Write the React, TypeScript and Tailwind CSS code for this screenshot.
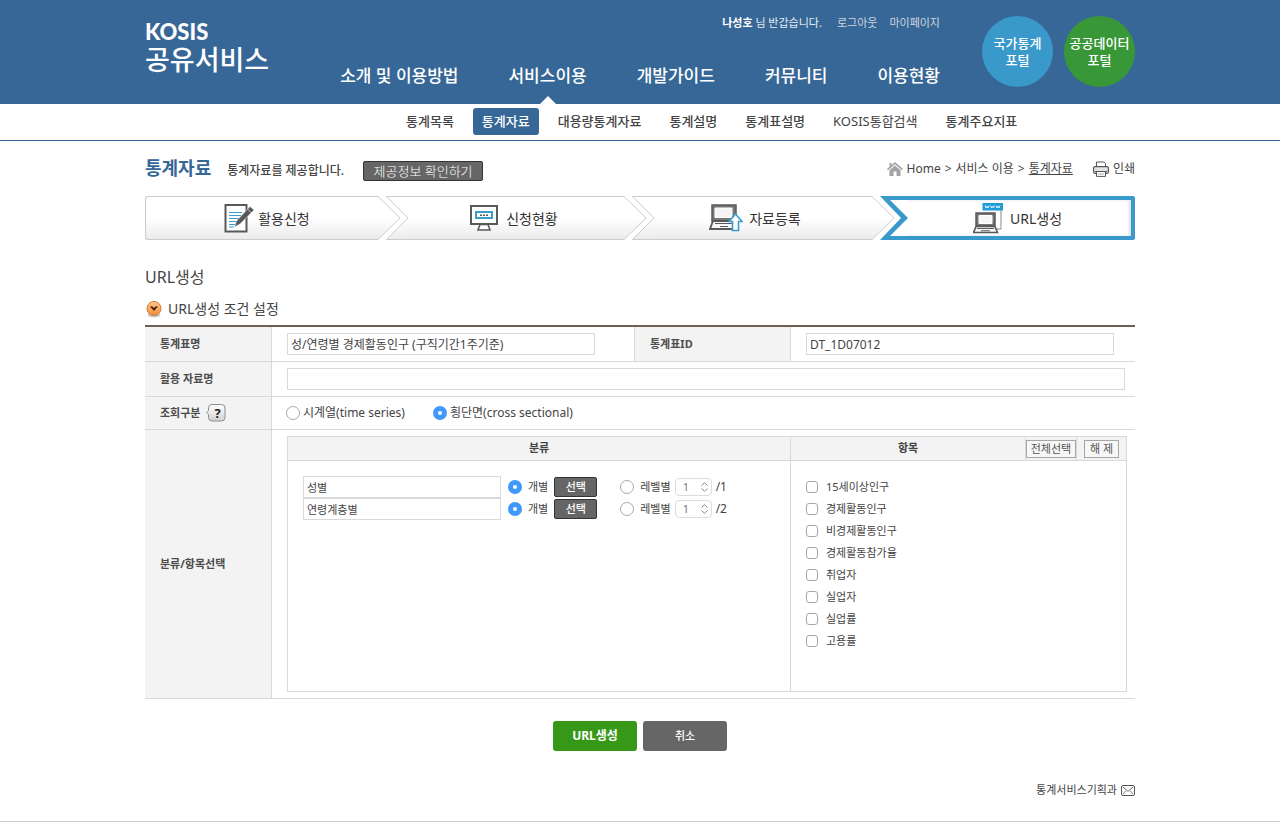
import { useState } from "react";

const NAV = ["소개 및 이용방법", "서비스이용", "개발가이드", "커뮤니티", "이용현황"];

const SUB_NAV = ["통계목록", "통계자료", "대용량통계자료", "통계설명", "통계표설명", "KOSIS통합검색", "통계주요지표"];

const ITEMS = ["15세이상인구", "경제활동인구", "비경제활동인구", "경제활동참가율", "취업자", "실업자", "실업률", "고용률"];

const GROUPS = [
  { id: "sex", name: "성별", levels: 1 },
  { id: "age", name: "연령계층별", levels: 2 },
];

const RADIO =
  "size-[14px] shrink-0 appearance-none rounded-full border border-[#a9a9a9] bg-white checked:border-[5px] checked:border-[#3f98fb]";
const CHECKBOX =
  "size-3 shrink-0 appearance-none rounded-[3px] border border-[#a6a6a6] bg-white checked:border-[#3f98fb] checked:bg-[#3f98fb]";
const FIELD = "h-[22px] border border-[#d9d9d9] bg-white px-[3px] text-[#444]";
const TH = "border-b border-[#d9d9d9] bg-[#f3f3f3] pl-[15px] text-left text-[11px] font-bold text-[#4c4c4c]";

function PencilNoteIcon() {
  return (
    <svg width="30" height="30" viewBox="0 0 30 30" fill="none" aria-hidden="true">
      <path d="M1.5 2H22.5V28.5H1.5Z" fill="#fff" stroke="#58595b" strokeWidth="2" />
      <path d="M5 9.5H18M5 12.500H17M5 15.500H15M5 18.500H13M5 21.500H11M5 24H10" stroke="#3a9ccf" strokeWidth="1.200" />
      <path d="M26 3.5L30 7L16 21L10.500 24L12.500 18Z" fill="#58595b" stroke="#fff" strokeWidth=".4" />
      <path d="M23.500 6L27.500 10" stroke="#fff" strokeWidth=".6" />
    </svg>
  );
}

function MonitorIcon() {
  return (
    <svg width="28" height="28" viewBox="0 0 28 28" fill="none" aria-hidden="true">
      <path d="M1 2H27V20H1Z" fill="#fff" stroke="#58595b" strokeWidth="2" />
      <path d="M10 20.500H18L20 26H8Z" fill="#fff" stroke="#58595b" strokeWidth="1.600" />
      <rect x="6" y="8" width="16" height="6" fill="#fff" stroke="#3a9ccf" strokeWidth="2" />
      <path d="M10 10.500H12V12H10ZM13 10.500H15V12H13ZM16 10.500H18V12H16Z" fill="#58595b" />
    </svg>
  );
}

function LaptopUploadIcon() {
  return (
    <svg width="34" height="28" viewBox="0 0 34 28" fill="none" aria-hidden="true">
      <path d="M3 1H27V17H3Z" fill="#777" stroke="#58595b" strokeWidth="1.500" />
      <path d="M6 4H23V13.500H6Z" fill="#f4f4f4" stroke="#fff" />
      <path d="M4 17H26L29 25H1Z" fill="#f7f7f7" stroke="#58595b" strokeWidth="1.800" />
      <path d="M6 19.500H24M11 22.500H19" stroke="#58595b" strokeWidth="1.200" />
      <path d="M26.500 10L33 17.500H29.500V26.500H23.500V17.500H20Z" fill="#fff" stroke="#3a9ccf" strokeWidth="1.600" />
    </svg>
  );
}

function LaptopLinkIcon() {
  return (
    <svg width="31" height="31" viewBox="0 0 31 31" fill="none" aria-hidden="true">
      <path d="M28 7V26H22" stroke="#888" />
      <path d="M9.500 0H30V7.500H9.500Z" fill="#1f9bd7" />
      <path
        d="M12 2.500L13 5L14 3L15 5L16 2.500M17.500 2.500L18.500 5L19.500 3L20.500 5L21.500 2.500M23 2.500L24 5L25 3L26 5L27 2.500"
        stroke="#fff"
        strokeWidth=".8"
      />
      <path d="M3 10H22V23H3Z" fill="#777" stroke="#58595b" strokeWidth="1.500" />
      <path d="M6 12.500H19V20.500H6Z" fill="#f7f7f7" stroke="#fff" />
      <path d="M3 23.500H22L24.500 29.500H0.500Z" fill="#f7f7f7" stroke="#58595b" strokeWidth="1.600" />
      <path d="M4 25.500H21M8 27.700H17" stroke="#58595b" strokeWidth="1.100" />
    </svg>
  );
}

function HomeIcon() {
  return (
    <svg width="16" height="14" viewBox="0 0 16 14" aria-hidden="true">
      <path d="M8 0L16 7L15 8.300L8 2.200L1 8.300L0 7L2.500 4.800V1H4.500V3Z" fill="#a3a3a3" />
      <path d="M8 3.500L13.500 8.300V14H9.500V9.500H6.500V14H2.500V8.300Z" fill="#a3a3a3" />
    </svg>
  );
}

function PrinterIcon() {
  return (
    <svg width="16" height="16" viewBox="0 0 16 16" fill="none" aria-hidden="true">
      <path d="M3.500 6V1H11L12.500 2.500V6" fill="#fff" stroke="#555" />
      <rect x=".6" y="5.600" width="14.800" height="6.800" rx="1.500" fill="#e4e4e4" stroke="#555" strokeWidth="1.200" />
      <path d="M2 10.500H14" stroke="#555" />
      <path d="M3.500 10.500H12.500V15.400H3.500Z" fill="#fff" stroke="#555" />
      <path d="M5 13H11" stroke="#aaa" />
    </svg>
  );
}

function OrangeBullet() {
  return (
    <svg width="17" height="18" viewBox="0 0 17 18" aria-hidden="true">
      <defs>
        <linearGradient id="bullet" x1="0" y1="0" x2="0" y2="1">
          <stop offset="0" stopColor="#ffc98c" />
          <stop offset="1" stopColor="#f58a35" />
        </linearGradient>
      </defs>
      <ellipse cx="9" cy="15" rx="6.500" ry="2.500" fill="#999" opacity=".5" />
      <circle cx="9" cy="8.500" r="7" fill="url(#bullet)" stroke="#c9793a" />
      <path d="M5 6.500L7 6.300L9 8L11 6.300L13 6.500L9 11Z" fill="#4a1c10" />
    </svg>
  );
}

function HelpIcon() {
  return (
    <svg width="20" height="20" viewBox="0 0 20 20" aria-hidden="true">
      <defs>
        <linearGradient id="help" x1="0" y1="0" x2="0" y2="1">
          <stop offset="0" stopColor="#fff" />
          <stop offset="1" stopColor="#d2d2d2" />
        </linearGradient>
      </defs>
      <path
        d="M6 1.500H15.500A3.500 3.500 0 0 1 19 5V14.500A3.500 3.500 0 0 1 15.500 18H6A3.500 3.500 0 0 1 2.500 14.500V11.500L.6 9.500L2.500 7.500V5A3.500 3.500 0 0 1 6 1.500Z"
        fill="url(#help)"
        stroke="#8d8d8d"
      />
    </svg>
  );
}

function StepDivider({ id }: { id: string }) {
  return (
    <svg className="shrink-0" width="30" height="44" viewBox="0 0 30 44" aria-hidden="true">
      <defs>
        <linearGradient id={id} gradientUnits="userSpaceOnUse" x1="0" y1="0" x2="0" y2="44">
          <stop offset=".5" stopColor="#fff" />
          <stop offset="1" stopColor="#ebebeb" />
        </linearGradient>
      </defs>
      <path d="M0 .5L22 22L0 43.500" fill={`url(#${id})`} stroke="#ccc" />
      <path d="M31 .5H8.500L30 22L8.500 43.500H31" fill={`url(#${id})`} stroke="none" />
      <path d="M31 .5H8.500L30 22L8.500 43.500H31" fill="none" stroke="#ccc" />
    </svg>
  );
}

function ActiveStepDivider() {
  return (
    <svg className="shrink-0" width="36" height="44" viewBox="0 0 36 44" aria-hidden="true">
      <defs>
        <linearGradient id="lastStep" gradientUnits="userSpaceOnUse" x1="0" y1="0" x2="0" y2="44">
          <stop offset=".5" stopColor="#fff" />
          <stop offset="1" stopColor="#ebebeb" />
        </linearGradient>
      </defs>
      <path d="M0 .5L22 22L0 43.500" fill="url(#lastStep)" stroke="#ccc" />
      <path d="M8 0H36V4H18L36 22L18 40H36V44H8L29 22Z" fill="#3999ca" />
    </svg>
  );
}

const STEP = "flex items-center justify-center border-y border-[#ccc] bg-linear-to-b from-white from-50% to-[#ebebeb]";

function Header() {
  return (
    <header>
      <div className="bg-[#376797] text-white">
        <div className="mx-auto flex h-[104px] w-full max-w-[990px]">
          <a href="#home" className="block shrink-0 pt-5">
            <span className="block font-['Lato',sans-serif] text-[22px] leading-6 font-black">KOSIS</span>
            <span className="block text-[27px] leading-8 font-medium">공유서비스</span>
          </a>
          <div className="flex flex-1 flex-col items-end">
            <div className="flex gap-3 pt-[15px] text-[11px] leading-4 text-[#cfd6dd]">
              <p className="mr-[3px] text-[#e6edf4]">
                <strong className="text-white">나성호</strong> 님 반갑습니다.
              </p>
              <a href="#logout">로그아웃</a>
              <a href="#mypage">마이페이지</a>
            </div>
            <nav className="mt-auto" aria-label="주 메뉴">
              <ul className="flex gap-[50px] text-[17px] leading-6 font-medium">
                {NAV.map((label) => (
                  <li key={label} className="relative h-10">
                    <a href="#menu">{label}</a>
                    {label === "서비스이용" && (
                      <svg className="absolute bottom-0 left-1/2 -translate-x-1/2" width="16" height="8" aria-hidden="true">
                        <path d="M0 8L8 0L16 8Z" fill="#fff" />
                      </svg>
                    )}
                  </li>
                ))}
              </ul>
            </nav>
          </div>
          <div className="ml-[42px] flex shrink-0 gap-[11px] pt-4 text-center text-[13px] leading-[17px] font-medium">
            <a href="#kosis" className="flex size-[71px] flex-col justify-center rounded-full bg-[#3999ca]">
              <span>국가통계</span>
              <span>포털</span>
            </a>
            <a href="#data" className="flex size-[71px] flex-col justify-center rounded-full bg-[#389838]">
              <span>공공데이터</span>
              <span>포털</span>
            </a>
          </div>
        </div>
      </div>
      <nav className="border-b border-[#376797]" aria-label="하위 메뉴">
        <ul className="mx-auto flex h-9 w-full max-w-[990px] items-start gap-2.5 pt-1 pl-[252px] text-[13px] leading-[27px] font-medium text-[#444]">
          {SUB_NAV.map((label) => (
            <li key={label}>
              <a
                href="#sub"
                className={
                  label === "통계자료"
                    ? "block rounded-[3px] bg-[#376797] px-[9px] text-white"
                    : label === "KOSIS통합검색"
                      ? "block px-[9px] font-normal"
                      : "block px-[9px]"
                }
              >
                {label}
              </a>
            </li>
          ))}
        </ul>
      </nav>
    </header>
  );
}

function Steps() {
  return (
    <ol className="flex h-11 text-[14px] text-[#333]">
      <li className={`${STEP} flex-[222_1_0%] gap-1 rounded-l-[3px] border-l pl-2.5`}>
        <PencilNoteIcon />
        활용신청
      </li>
      <StepDivider id="step1" />
      <li className={`${STEP} flex-[212_1_0%] gap-2 pr-1`}>
        <MonitorIcon />
        신청현황
      </li>
      <StepDivider id="step2" />
      <li className={`${STEP} flex-[202_1_0%] gap-1.5 pr-4`}>
        <LaptopUploadIcon />
        자료등록
      </li>
      <ActiveStepDivider />
      <li
        aria-current="step"
        className="flex flex-[219_1_0%] items-center justify-center gap-1.5 rounded-r-[3px] border-y-4 border-r-4 border-[#3999ca] bg-white pr-1 shadow-[inset_-2px_0_3px_#ddd]"
      >
        <LaptopLinkIcon />
        URL생성
      </li>
    </ol>
  );
}

function GroupRow({ id, name, levels }: { id: string; name: string; levels: number }) {
  return (
    <div className="flex h-[22px] items-center">
      <input aria-label="분류명" readOnly value={name} className={`${FIELD} w-[198px] text-[11px]`} />
      <input type="radio" id={`${id}-each`} name={id} defaultChecked className={`${RADIO} ml-[7px]`} />
      <label htmlFor={`${id}-each`} className="ml-1.5">
        개별
      </label>
      <button
        type="button"
        className="ml-1.5 h-5 w-[43px] rounded-[2px] border border-[#333] bg-[#666] text-[11px] leading-4 font-medium text-white"
      >
        선택
      </button>
      <input type="radio" id={`${id}-level`} name={id} className={`${RADIO} ml-[23px]`} />
      <label htmlFor={`${id}-level`} className="ml-1.5">
        레벨별
      </label>
      <span className="relative ml-1 flex">
        <select
          aria-label={`${name} 레벨`}
          className="h-[18px] w-[37px] appearance-none rounded-[4px] border border-[#dcdcdc] bg-white pl-[7px] text-[11px] leading-4 text-[#777]"
        >
          {Array.from({ length: levels }, (_, i) => (
            <option key={i}>{i + 1}</option>
          ))}
        </select>
        <svg
          className="pointer-events-none absolute top-1 right-1"
          width="7"
          height="10"
          viewBox="0 0 7 10"
          fill="none"
          stroke="#8a8a8a"
          aria-hidden="true"
        >
          <path d="M.5 3.500L3.500 .7L6.500 3.500M.5 6.500L3.500 9.300L6.500 6.500" />
        </svg>
      </span>
      <span className="ml-1 text-[12px]">/{levels}</span>
    </div>
  );
}

function SelectionTable({ checked, onChange }: { checked: string[]; onChange: (next: string[]) => void }) {
  const toggle = (item: string) =>
    onChange(checked.includes(item) ? checked.filter((c) => c !== item) : [...checked, item]);
  const small = "h-[18px] border border-[#a6a6a6] bg-[#f7f7f7] text-[11px] leading-4 font-normal text-[#555]";

  return (
    <table className="w-full table-fixed border-collapse border border-[#d9d9d9] text-[11px] text-[#444]">
      <colgroup>
        <col />
        <col className="w-[235px]" />
        <col className="w-[51px]" />
        <col className="w-[50px]" />
      </colgroup>
      <thead>
        <tr className="h-6 bg-[#f3f3f3]">
          <th className="border border-[#d9d9d9] p-0 font-bold">분류</th>
          <th className="border border-[#d9d9d9] p-0 font-bold">항목</th>
          <th className="border border-[#d9d9d9] p-0">
            <button type="button" className={`${small} block w-full`} onClick={() => onChange(ITEMS)}>
              전체선택
            </button>
          </th>
          <th className="border border-[#d9d9d9] p-0">
            <button type="button" className={`${small} mx-auto block w-[35px]`} onClick={() => onChange([])}>
              해 제
            </button>
          </th>
        </tr>
      </thead>
      <tbody>
        <tr className="h-[231px] align-top">
          <td className="border border-[#d9d9d9] p-[15px]">
            {GROUPS.map((g) => (
              <GroupRow key={g.id} {...g} />
            ))}
          </td>
          <td colSpan={3} className="border border-[#d9d9d9] p-[15px]">
            <ul>
              {ITEMS.map((item) => (
                <li key={item}>
                  <label className="flex h-[22px] items-center gap-2">
                    <input type="checkbox" className={CHECKBOX} checked={checked.includes(item)} onChange={() => toggle(item)} />
                    {item}
                  </label>
                </li>
              ))}
            </ul>
          </td>
        </tr>
      </tbody>
    </table>
  );
}

export default function App() {
  const [title, setTitle] = useState("");
  const [checked, setChecked] = useState<string[]>([]);

  return (
    <div lang="ko" className="bg-white font-['Noto_Sans','Noto_Sans_CJK_KR',sans-serif] text-[#444]">
      <Header />
      <main className="mx-auto w-full max-w-[990px]">
        <div className="flex h-[55px] items-center">
          <h1 className="text-[18px] font-bold text-[#376797]">통계자료</h1>
          <p className="ml-4 pt-1 text-[12px] font-medium">통계자료를 제공합니다.</p>
          <button
            type="button"
            className="mt-1 ml-[19px] h-5 w-[120px] rounded-[2px] border border-[#333] bg-[#666] text-[13px] leading-4 font-light text-white"
          >
            제공정보 확인하기
          </button>
          <nav className="ml-auto flex items-center gap-1 text-[12px]" aria-label="현재 위치">
            <HomeIcon />
            <a href="#home">Home</a>
            <span>&gt;</span>
            <a href="#service">서비스 이용</a>
            <span>&gt;</span>
            <a href="#data" className="underline">
              통계자료
            </a>
          </nav>
          <button type="button" className="ml-5 flex items-center gap-1 text-[12px]">
            <PrinterIcon />
            인쇄
          </button>
        </div>

        <Steps />

        <h2 className="mt-[25px] text-[16px] leading-6">URL생성</h2>
        <h3 className="mt-2 mb-1 flex items-center gap-1.5 text-[14px] leading-6">
          <OrangeBullet />
          URL생성 조건 설정
        </h3>

        <form onSubmit={(e) => e.preventDefault()}>
          <table className="w-full table-fixed border-separate border-spacing-0 border-t-2 border-[#735f4f]">
            <colgroup>
              <col className="w-[127px]" />
              <col />
              <col className="w-[157px]" />
              <col className="w-[344px]" />
            </colgroup>
            <tbody>
              <tr className="h-[35px]">
                <th className={`${TH} border-r`}>
                  <label htmlFor="table-name">통계표명</label>
                </th>
                <td className="border-b border-[#d9d9d9] p-0 pl-[15px]">
                  <input
                    id="table-name"
                    readOnly
                    value="성/연령별 경제활동인구 (구직기간1주기준)"
                    className={`${FIELD} block w-[308px] text-[12px]`}
                  />
                </td>
                <th className={`${TH} border-x`}>
                  <label htmlFor="table-id">통계표ID</label>
                </th>
                <td className="border-b border-[#d9d9d9] p-0 pl-[15px]">
                  <input id="table-id" readOnly value="DT_1D07012" className={`${FIELD} block w-[308px] text-[12px]`} />
                </td>
              </tr>
              <tr className="h-[35px]">
                <th className={`${TH} border-r`}>
                  <label htmlFor="title">활용 자료명</label>
                </th>
                <td colSpan={3} className="border-b border-[#d9d9d9] py-0 pr-2.5 pl-[15px]">
                  <input
                    id="title"
                    value={title}
                    onChange={(e) => setTitle(e.target.value)}
                    className={`${FIELD} block w-full text-[12px]`}
                  />
                </td>
              </tr>
              <tr className="h-[33px]">
                <th className={`${TH} border-r`}>
                  <span className="flex items-center gap-1.5">
                    조회구분
                    <button type="button" aria-label="도움말" className="relative flex size-5 items-center justify-center">
                      <HelpIcon />
                      <span className="absolute inset-0 pl-0.5 text-center text-[13px] leading-5 font-bold text-[#222]">?</span>
                    </button>
                  </span>
                </th>
                <td colSpan={3} className="border-b border-[#d9d9d9] p-0 pl-3.5 text-[12px]">
                  <div className="flex items-center gap-7">
                    <label className="flex items-center gap-[3px]">
                      <input type="radio" name="kind" className={RADIO} />
                      시계열(time series)
                    </label>
                    <label className="flex items-center gap-[3px]">
                      <input type="radio" name="kind" defaultChecked className={RADIO} />
                      횡단면(cross sectional)
                    </label>
                  </div>
                </td>
              </tr>
              <tr>
                <th className={`${TH} border-r`}>분류/항목선택</th>
                <td colSpan={3} className="border-b border-[#d9d9d9] pt-1.5 pr-2 pb-1.5 pl-[15px]">
                  <SelectionTable checked={checked} onChange={setChecked} />
                </td>
              </tr>
            </tbody>
          </table>

          <div className="mt-[22px] flex justify-center gap-1.5 text-white">
            <button type="submit" className="h-[30px] w-[84px] rounded-[3px] bg-[#379818] text-[12px] font-bold">
              URL생성
            </button>
            <button type="button" className="h-[30px] w-[84px] rounded-[3px] bg-[#666] text-[11px] font-medium">
              취소
            </button>
          </div>
        </form>

        <p className="mt-[31px] flex items-center justify-end gap-1 pb-[23px] text-[11px] leading-4">
          통계서비스기획과
          <a href="#mail" aria-label="메일 보내기">
            <svg width="14" height="11" viewBox="0 0 14 11" fill="none" stroke="#555" aria-hidden="true">
              <rect x=".5" y=".5" width="13" height="10" rx="1.500" />
              <path d="M2 2L7 6.500L12 2M2 9L5 5.500M12 9L9 5.500" strokeWidth=".8" />
            </svg>
          </a>
        </p>
      </main>
      <footer className="border-t border-[#ccc]" />
    </div>
  );
}
